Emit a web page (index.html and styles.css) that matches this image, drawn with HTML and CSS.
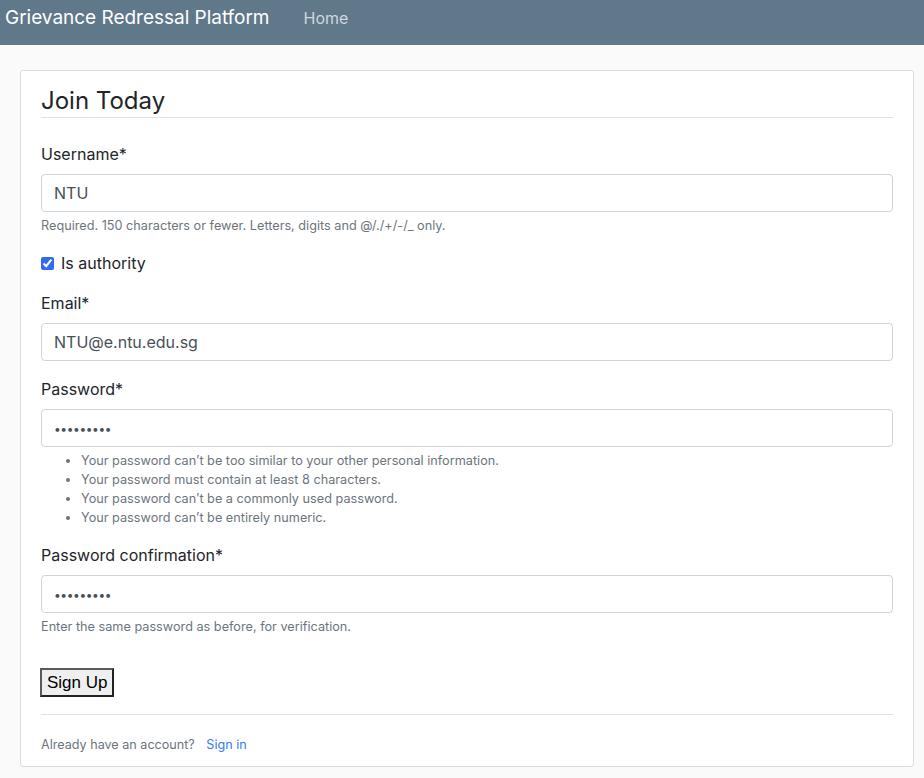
FILE: index.html
```html
<!DOCTYPE html>
<html lang="en">
<head>
<meta charset="utf-8">
<title>Grievance Redressal Platform</title>
<link rel="stylesheet" href="styles.css">
</head>
<body>
<header class="navbar">
  <a class="brand" href="#">Grievance Redressal Platform</a>
  <a class="nav-link" href="#">Home</a>
</header>
<main class="main">
  <div class="content-section">
    <form class="form">
      <fieldset class="fieldset">
        <legend class="legend">Join Today</legend>
        <div class="form-group">
          <label class="label" for="id_username">Username*</label>
          <input class="input" id="id_username" type="text" value="NTU">
          <small class="form-text">Required. 150 characters or fewer. Letters, digits and @/./+/-/_ only.</small>
        </div>
        <div class="form-group check-group">
          <input class="checkbox" id="id_auth" type="checkbox" checked>
          <label class="check-label" for="id_auth">Is authority</label>
        </div>
        <div class="form-group">
          <label class="label" for="id_email">Email*</label>
          <input class="input" id="id_email" type="text" value="NTU@e.ntu.edu.sg">
        </div>
        <div class="form-group">
          <label class="label" for="id_password1">Password*</label>
          <input class="input input-password" id="id_password1" type="password" value="password1">
          <ul class="form-text help-list">
            <li>Your password can’t be too similar to your other personal information.</li>
            <li>Your password must contain at least 8 characters.</li>
            <li>Your password can’t be a commonly used password.</li>
            <li>Your password can’t be entirely numeric.</li>
          </ul>
        </div>
        <div class="form-group">
          <label class="label" for="id_password2">Password confirmation*</label>
          <input class="input input-password" id="id_password2" type="password" value="password1">
          <small class="form-text">Enter the same password as before, for verification.</small>
        </div>
      </fieldset>
      <div class="form-group button-group">
        <button class="button" type="button">Sign Up</button>
      </div>
    </form>
    <div class="footer-note">
      <small class="muted">Already have an account? <a class="signin" href="#">Sign in</a></small>
    </div>
  </div>
</main>
</body>
</html>
```

FILE: styles.css
```css
* { box-sizing: border-box; }
html, body { margin: 0; }
body {
  background: #fafafa;
  font-family: Inter, "Noto Sans", "Liberation Sans", sans-serif;
  font-size: 16px;
  line-height: 1.5;
  color: #212529;
}
.navbar {
  height: 45px;
  background: #5f788a;
  display: flex;
  align-items: center;
  padding-left: 5px;
  padding-bottom: 9px;
}
.brand {
  color: #fff;
  font-size: 19px;
  letter-spacing: -0.02px;
  text-decoration: none;
}
.nav-link {
  margin-left: 34px;
  color: #cfd7dd;
  font-size: 16px;
  text-decoration: none;
}
.main {
  padding: 25px 10px 0 20px;
}
.content-section {
  background: #fff;
  border: 1px solid #dddddd;
  border-radius: 3px;
  padding: 10px 20px 11px;
}
.fieldset {
  border: 0;
  margin: 0 0 16px;
  padding: 0;
  min-width: 0;
}
.legend {
  display: block;
  width: 100%;
  padding: 3px 0 0;
  font-size: 24px;
  line-height: 33px;
  border-bottom: 1px solid #dee2e6;
  margin-bottom: 24px;
}
.form-group { margin-bottom: 16px; }
.button-group { margin-bottom: 17px; }
.label {
  display: block;
  margin-bottom: 8px;
}
.input {
  display: block;
  width: 100%;
  height: 38px;
  padding: 6px 12px;
  font-family: inherit;
  font-size: 16px;
  color: #495057;
  background: #fff;
  border: 1px solid #ced4da;
  border-radius: 4px;
}
.input-password {
  font-size: 12px;
  letter-spacing: -0.4px;
}
.form-text {
  display: block;
  margin-top: 4px;
  font-size: 12.7px;
  line-height: 19px;
  color: #6c757d;
}
.help-list {
  margin-bottom: 0;
  padding-left: 40px;
}
.check-group {
  display: flex;
  align-items: center;
  gap: 7px;
}
.checkbox {
  margin: 0;
  width: 13px;
  height: 13px;
  accent-color: #2f6af0;
}
.button {
  display: block;
  font-family: "Liberation Sans", Arial, sans-serif;
  font-size: 17px;
  line-height: 21px;
  padding: 2px 5px;
  color: #000;
  background: #efefef;
  border: 2px solid;
  border-color: #5a5a5a #222 #222 #5a5a5a;
  border-radius: 0;
  margin-left: -1px;
}
.footer-note {
  border-top: 1px solid #dee2e6;
  padding-top: 16px;
}
.muted {
  font-size: 12.6px;
  color: #6c757d;
}
.signin {
  margin-left: 8px;
  color: #2f7cf6;
  text-decoration: none;
}
```
